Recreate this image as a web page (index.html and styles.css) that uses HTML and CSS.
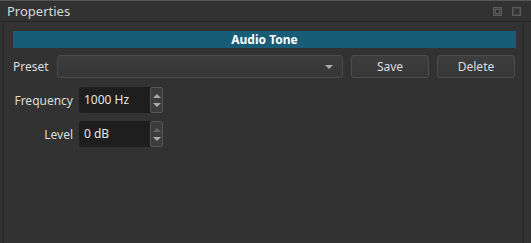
FILE: index.html
```html
<!DOCTYPE html>
<html lang="en">
  <head>
    <meta charset="UTF-8" />
    <title>Properties</title>
    <link rel="stylesheet" href="styles.css">
  </head>
  <body>
    <div class="dock">
      <div class="titlebar">
        <span class="title">Properties</span>
        <span class="tbtn">
          <svg width="9" height="9" viewBox="0 0 9 9">
            <rect x="0.5" y="0.5" width="8" height="8" fill="#444" stroke="#5c5c5c" />
            <rect x="2.5" y="2.5" width="4" height="4" fill="#2e2e2e" stroke="#5c5c5c" />
          </svg>
        </span>
        <span class="tbtn">
          <svg width="9" height="9" viewBox="0 0 9 9">
            <rect x="0.5" y="0.5" width="8" height="8" fill="#444" stroke="#5c5c5c" />
            <path d="M2.5 2.5 L6.5 6.5 M6.5 2.5 L2.5 6.5" stroke="#2a2a2a" stroke-width="1.3" />
          </svg>
        </span>
      </div>
      <div class="panel">
        <div class="header">Audio Tone</div>

        <div class="preset">
          <span class="plabel">Preset</span>
          <div class="combo">
            <span class="arrow"></span>
          </div>
          <button class="btn">Save</button>
          <button class="btn">Delete</button>
        </div>

        <div class="form">
          <label class="flabel">Frequency</label>
          <div class="spin">
            <span class="value">1000 Hz</span>
            <span class="spinbtns">
              <span class="up"></span>
              <span class="down"></span>
            </span>
          </div>

          <label class="flabel">Level</label>
          <div class="spin">
            <span class="value">0 dB</span>
            <span class="spinbtns dim">
              <span class="up"></span>
              <span class="down"></span>
            </span>
          </div>
        </div>
      </div>
    </div>
  </body>
</html>
```

FILE: styles.css
```css
* {
  margin: 0;
  padding: 0;
  box-sizing: border-box;
}

body {
  background-color: #323232;
  font: 12px "Noto Sans", "Open Sans", sans-serif;
  color: #dcdcdc;
  width: 531px;
  height: 243px;
  overflow: hidden;
}

.dock {
  height: 243px;
  border-top: 1px solid #565656;
  display: flex;
  flex-direction: column;
}

.titlebar {
  height: 21px;
  display: flex;
  align-items: center;
  padding: 0 10px 0 7px;
  gap: 10px;
  border-bottom: 1px solid #272727;
}

.title {
  flex: 1;
  font-size: 13px;
  color: #d8d8d8;
}

.tbtn {
  display: flex;
}

.panel {
  flex: 1;
  margin: 0 7px 0 3px;
  border-left: 1px solid #262626;
  border-right: 1px solid #262626;
  padding: 9px 7px 0 9px;
}

.header {
  height: 17px;
  background-color: #185c77;
  color: #fff;
  font-weight: bold;
  text-align: center;
  line-height: 17px;
}

.preset {
  display: flex;
  align-items: center;
  margin-top: 7px;
  height: 23px;
}

.plabel {
  width: 44px;
}

.combo {
  width: 286px;
  height: 23px;
  border: 1px solid #4a4a4a;
  border-radius: 3px;
  background: linear-gradient(#3c3c3c, #363636);
  display: flex;
  justify-content: flex-end;
  align-items: center;
  padding-right: 9px;
}

.arrow {
  width: 0;
  height: 0;
  border-left: 4px solid transparent;
  border-right: 4px solid transparent;
  border-top: 4px solid #aaa;
}

.btn {
  margin-left: 8px;
  width: 78px;
  height: 23px;
  border: 1px solid #4d4d4d;
  border-radius: 3px;
  background: linear-gradient(#3e3e3e, #363636);
  color: #dcdcdc;
  font: 12px "Noto Sans", "Open Sans", sans-serif;
}

.form {
  display: grid;
  grid-template-columns: 60px 84px;
  column-gap: 6px;
  row-gap: 8px;
  margin-top: 9px;
  align-items: center;
}

.flabel {
  text-align: right;
}

.spin {
  height: 26px;
  display: flex;
  background-color: #1e1e1e;
  border-radius: 2px;
}

.value {
  flex: 1;
  padding-left: 5px;
  line-height: 26px;
  color: #e6e6e6;
}

.spinbtns {
  width: 13px;
  border: 1px solid #555;
  border-radius: 2px;
  background-color: #3c3c3c;
  display: flex;
  flex-direction: column;
  justify-content: space-around;
  align-items: center;
  padding: 3px 0;
}

.up {
  border-left: 4px solid transparent;
  border-right: 4px solid transparent;
  border-bottom: 4px solid #aaa;
}

.down {
  border-left: 4px solid transparent;
  border-right: 4px solid transparent;
  border-top: 4px solid #aaa;
}

.dim .up {
  border-bottom-color: #666;
}
```
